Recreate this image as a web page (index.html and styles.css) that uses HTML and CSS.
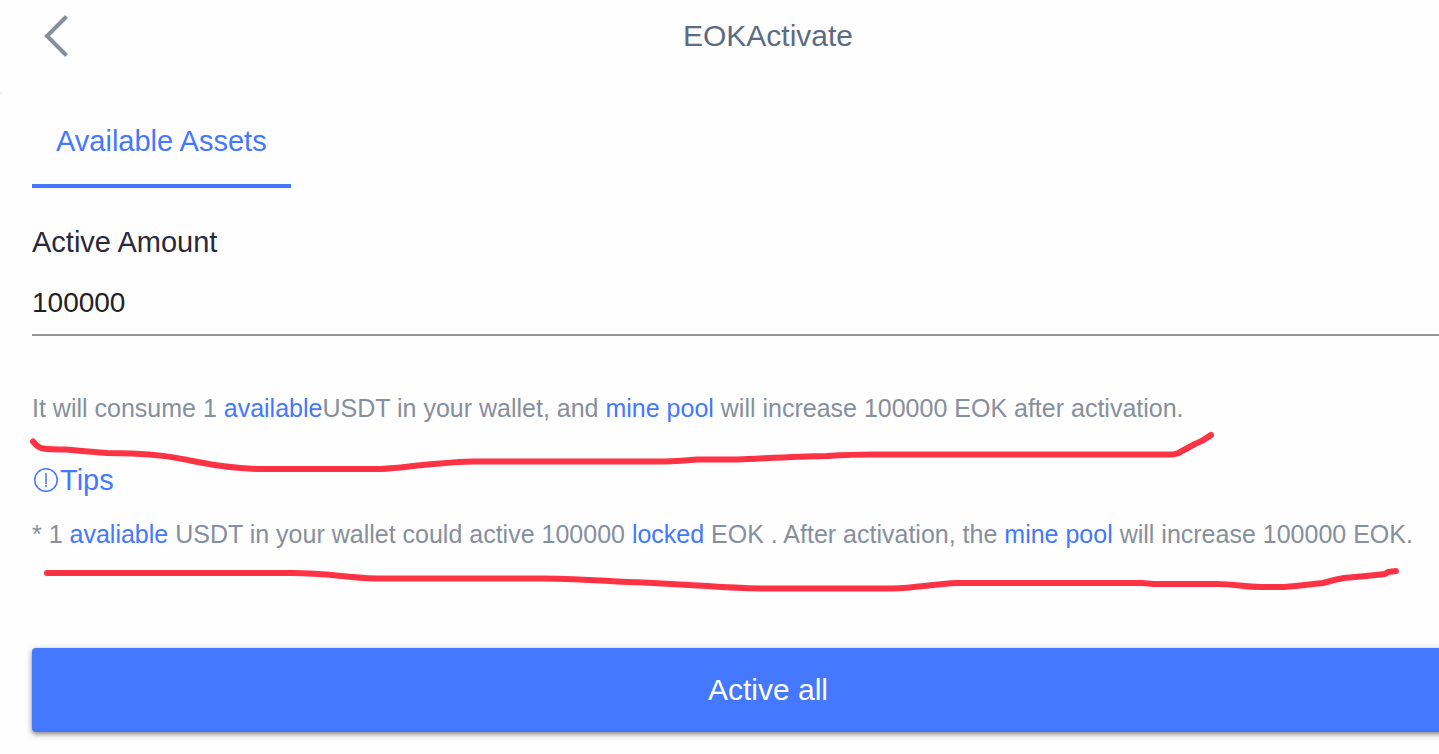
FILE: index.html
```html
<!DOCTYPE html>
<html lang="en">
<head>
	<meta charset="UTF-8">
	<title>EOKActivate</title>
	<link rel="stylesheet" href="styles.css">
</head>
<body>
	<div class="page">
		<header class="header">
			<button class="back" type="button" aria-label="Back">
				<svg width="26" height="44" viewBox="0 0 26 44">
					<path d="M24.500 2.500L5 22l19.500 19.500" />
				</svg>
			</button>
			<h1 class="title">EOKActivate</h1>
		</header>
		<main class="main">
			<nav class="tabs">
				<button class="tab on" type="button">Available Assets</button>
			</nav>
			<form class="form">
				<label class="label" for="amount">Active Amount</label>
				<input class="amount" id="amount" type="text" value="100000">
				<div class="marked">
					<p class="text">It will consume 1 <span class="blue">available</span>USDT in your wallet, and <span class="blue">mine pool</span> will increase 100000 EOK after activation.</p>
					<!-- hand drawn underline -->
					<svg class="mark" width="1220" height="50" viewBox="0 0 1220 50">
						<path d="M1 11.500C4 15 6 18 11 18.500C18 19.500 24 19.500 34 19.500C50 21 60 22 75 23L100 23.500C130 24.500 145 28 166 32C188 36.500 200 38 225 39H349C370 38 380 35.500 408 33.500Q430 31.500 440 31.500H633Q650 31 665 29.500H705C740 28 765 26.500 795 26Q820 24.500 840 24.500H1141Q1146 24 1150 21L1163 14Q1171 11 1179 5" />
					</svg>
				</div>
				<div class="tips">
					<svg class="tips-icon" width="28" height="28" viewBox="0 0 28 28">
						<circle cx="14" cy="14" r="11.200" />
						<path d="M14 7v11M14 19v2" />
					</svg>
					<h2 class="tips-title">Tips</h2>
				</div>
				<div class="marked">
					<p class="text">* 1 <span class="blue">avaliable</span> USDT in your wallet could active 100000 <span class="blue">locked</span> EOK . After activation, the <span class="blue">mine pool</span> will increase 100000 EOK.</p>
					<svg class="mark" width="1400" height="50" viewBox="0 0 1400 50">
						<path d="M15 17H260C300 17 310 22 345 22.500H512C560 23 580 26 612 26.500L675 30Q705 32 730 32.500H860C885 32 900 28 925 27H1110L1122 28H1185C1205 28 1210 31 1230 31H1252C1275 29 1280 28 1291 27Q1305 23 1312 22L1334 20L1353 18L1356 16L1364 15" />
					</svg>
				</div>
				<button class="submit" type="button">Active all</button>
			</form>
		</main>
	</div>
</body>
</html>
```
FILE: styles.css
```css
* {
	margin: 0;
	padding: 0;
	box-sizing: border-box;
}
body {
	overflow: hidden;
	background: #f0f0f2;
	font-family: "Liberation Sans", Arial, sans-serif;
}
/* the page runs past the right edge of the window */
.page {
	margin-right: -97px;
}
.header {
	display: grid;
	grid-template-columns: 96px 1fr 96px;
	align-items: start;
	height: 92px;
	padding-top: 14px;
	background: #fefefe;
}
.back {
	height: 44px;
	padding-left: 42px;
	border: none;
	background: none;
	text-align: left;
	cursor: pointer;
}
.back svg {
	display: block;
}
.back path {
	fill: none;
	stroke: #868f9d;
	stroke-width: 4;
}
.title {
	line-height: 44px;
	font-size: 30px;
	font-weight: normal;
	text-align: center;
	color: #5c6b84;
}
.main {
	min-height: calc(100vh - 92px);
	padding: 0 32px 22px;
	border-radius: 4px 4px 0 0;
	background: #fefefe;
}
.tabs {
	display: flex;
}
.tab {
	height: 96px;
	padding: 6px 24px 0;
	border: none;
	border-bottom: 4px solid transparent;
	background: none;
	font-family: inherit;
	font-size: 29px;
	color: #868f9d;
	cursor: pointer;
}
.tabs .on {
	border-bottom-color: #4378ff;
	color: #4378ff;
}
.form {
	display: flex;
	flex-direction: column;
}
.label {
	margin-top: 36px;
	line-height: 36px;
	font-size: 29px;
	color: #29293d;
}
.amount {
	width: 100%;
	height: 60px;
	margin: 16px 0 54px;
	padding-bottom: 4px;
	border: none;
	border-bottom: 2px solid #949494;
	outline: none;
	background: none;
	font-family: inherit;
	font-size: 28px;
	color: #212121;
}
.marked {
	position: relative;
}
.text {
	line-height: 36px;
	font-size: 25px;
	color: #868f9d;
}
.blue {
	color: #4378ff;
}
.mark {
	position: absolute;
	top: 40px;
	left: 0;
	overflow: visible;
	pointer-events: none;
}
.mark path {
	fill: none;
	stroke: #ff3344;
	stroke-width: 6;
	stroke-linecap: round;
	stroke-linejoin: round;
}
.tips {
	display: flex;
	align-items: center;
	margin: 36px 0 18px;
}
.tips-icon {
	fill: none;
	stroke: #4378ff;
	stroke-width: 1.5;
}
.tips-title {
	line-height: 36px;
	font-size: 29px;
	font-weight: normal;
	color: #4378ff;
}
.submit {
	height: 84px;
	margin-top: 96px;
	border: none;
	border-radius: 4px;
	background: #4378ff;
	box-shadow: 0 2px 4px rgba(0, 0, 0, .4), 0 2px 10px rgba(0, 0, 0, .15);
	font-family: inherit;
	font-size: 30px;
	color: #fff;
	cursor: pointer;
}
```
